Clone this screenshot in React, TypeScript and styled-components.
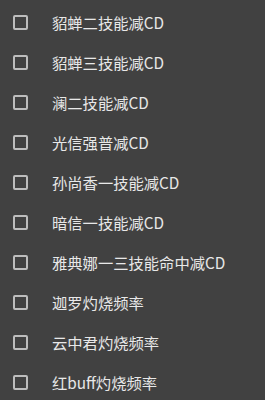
import { createGlobalStyle, styled } from "styled-components";

const GlobalStyle = createGlobalStyle`
  html, body {
    margin: 0;
    padding: 0;
    background: #414141;
  }
`;

const List = styled.div`
  display: flex;
  flex-direction: column;
  padding-top: 2px;
  background: #414141;
  min-height: 400px;
  font-family: "Noto Sans CJK SC", "Noto Sans", sans-serif;
`;

const Row = styled.label`
  display: flex;
  align-items: center;
  height: 40px;
  padding-left: 13px;
  gap: 24px;
`;

const Box = styled.span`
  box-sizing: border-box;
  width: 15px;
  height: 15px;
  border: 2px solid #bdbdbd;
  border-radius: 2px;
  flex-shrink: 0;
`;

const Label = styled.span`
  color: #e8e8e8;
  font-size: 15.3px;
  line-height: 20px;
`;

const items = [
  "貂蝉二技能减CD",
  "貂蝉三技能减CD",
  "澜二技能减CD",
  "光信强普减CD",
  "孙尚香一技能减CD",
  "暗信一技能减CD",
  "雅典娜一三技能命中减CD",
  "迦罗灼烧频率",
  "云中君灼烧频率",
  "红buff灼烧频率",
];

export default function App() {
  return (
    <>
      <GlobalStyle />
      <List>
        {items.map((item) => (
          <Row key={item}>
            <Box />
            <Label>{item}</Label>
          </Row>
        ))}
      </List>
    </>
  );
}
